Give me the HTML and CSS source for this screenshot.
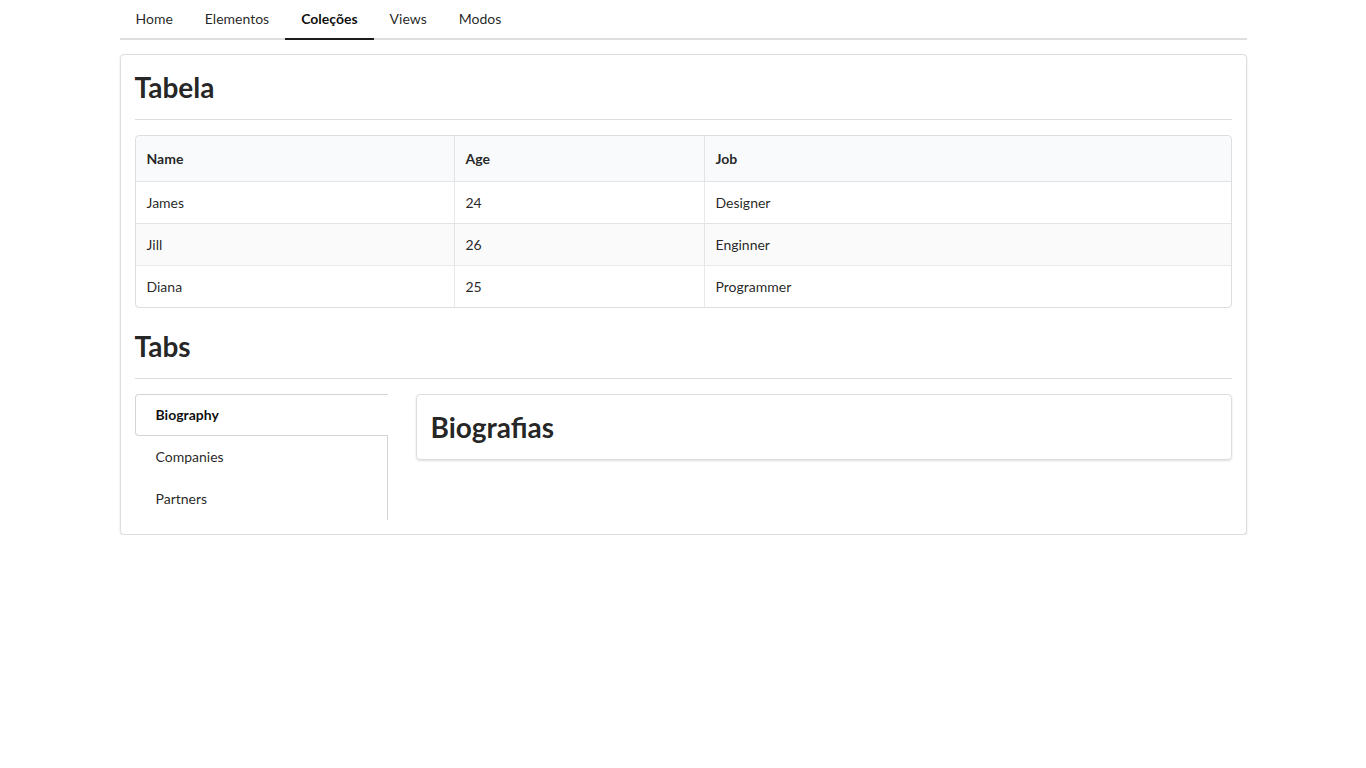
FILE: index.html
```html
<!DOCTYPE html>
<html lang="pt">
<head>
<meta charset="utf-8">
<title>Coleções</title>
<link rel="stylesheet" href="styles.css">
</head>
<body>
<div class="container">
  <nav class="top-menu">
    <a class="item">Home</a>
    <a class="item">Elementos</a>
    <a class="item active">Coleções</a>
    <a class="item">Views</a>
    <a class="item">Modos</a>
  </nav>
  <section class="segment">
    <h1 class="dividing-header">Tabela</h1>
    <table class="data-table">
      <colgroup>
        <col class="col-name">
        <col class="col-age">
        <col class="col-job">
      </colgroup>
      <thead>
        <tr><th>Name</th><th>Age</th><th>Job</th></tr>
      </thead>
      <tbody>
        <tr><td>James</td><td>24</td><td>Designer</td></tr>
        <tr class="striped"><td>Jill</td><td>26</td><td>Enginner</td></tr>
        <tr><td>Diana</td><td>25</td><td>Programmer</td></tr>
      </tbody>
    </table>
    <h1 class="dividing-header second">Tabs</h1>
    <div class="tabs">
      <div class="tab-menu">
        <a class="tab-item active">Biography</a>
        <a class="tab-item">Companies</a>
        <a class="tab-item">Partners</a>
      </div>
      <div class="tab-content">
        <div class="inner-segment">
          <h1 class="plain-header">Biografias</h1>
        </div>
      </div>
    </div>
  </section>
</div>
</body>
</html>
```

FILE: styles.css
```css
* { box-sizing: border-box; }
html, body {
  margin: 0;
  padding: 0;
  background: #fff;
  font-family: Lato, "Open Sans", "Liberation Sans", sans-serif;
  font-size: 14px;
  color: rgba(0,0,0,.87);
}
.container {
  width: 1127px;
  margin: 0 auto;
}
.top-menu {
  display: flex;
  border-bottom: 2px solid rgba(34,36,38,.15);
}
.top-menu .item {
  display: block;
  padding: 12px 16px;
  line-height: 14px;
  font-size: 14px;
  color: rgba(0,0,0,.87);
  border-bottom: 2px solid transparent;
  margin-bottom: -2px;
  cursor: pointer;
}
.top-menu .item.active {
  border-bottom-color: #1b1c1d;
  font-weight: 700;
  color: rgba(0,0,0,.95);
}
.segment {
  margin-top: 14px;
  border: 1px solid rgba(34,36,38,.15);
  border-radius: 4px;
  box-shadow: 0 1px 2px 0 rgba(34,36,38,.15);
  padding: 14px;
}
.dividing-header {
  margin: 0 0 15px;
  font-size: 28px;
  line-height: 36px;
  font-weight: 700;
  padding-bottom: 14px;
  border-bottom: 1px solid rgba(34,36,38,.15);
  color: rgba(0,0,0,.87);
}
.dividing-header.second {
  margin-top: 20px;
}
.data-table {
  width: 100%;
  table-layout: fixed;
  border-collapse: separate;
  border-spacing: 0;
  border: 1px solid rgba(34,36,38,.15);
  border-radius: 4px;
  font-size: 14px;
}
.col-name { width: 318px; }
.col-age { width: 250px; }
.data-table th {
  text-align: left;
  background: #f9fafb;
  font-weight: 700;
  padding: 13px 11px 12px;
  line-height: 20px;
  border-bottom: 1px solid rgba(34,36,38,.1);
  color: rgba(0,0,0,.87);
}
.data-table th:first-child { border-top-left-radius: 4px; }
.data-table th:last-child { border-top-right-radius: 4px; }
.data-table td {
  padding: 11px 11px 10px;
  line-height: 20px;
  border-top: 1px solid rgba(34,36,38,.1);
}
.data-table tbody tr:first-child td { border-top: none; }
.data-table th + th,
.data-table td + td {
  border-left: 1px solid rgba(34,36,38,.1);
}
.data-table tr.striped td {
  background: rgba(0,0,50,.02);
}
.tabs {
  display: flex;
  gap: 28px;
}
.tab-menu {
  width: 253px;
  flex: 0 0 253px;
  display: flex;
  flex-direction: column;
  border-right: 1px solid #d4d4d5;
}
.tab-item {
  display: block;
  padding: 13px 20px;
  line-height: 14px;
  font-size: 14px;
  border: 1px solid transparent;
  border-right: none;
  color: rgba(0,0,0,.87);
  cursor: pointer;
}
.tab-item.active {
  background: #fff;
  border-color: #d4d4d5;
  border-radius: 4px 0 0 4px;
  margin-right: -1px;
  font-weight: 700;
  color: rgba(0,0,0,.95);
}
.tab-content {
  flex: 1;
}
.inner-segment {
  border: 1px solid rgba(34,36,38,.15);
  border-radius: 4px;
  box-shadow: 0 1px 2px 0 rgba(34,36,38,.15);
  padding: 14px;
}
.plain-header {
  margin: 0;
  font-size: 28px;
  line-height: 36px;
  font-weight: 700;
  color: rgba(0,0,0,.87);
}
```
